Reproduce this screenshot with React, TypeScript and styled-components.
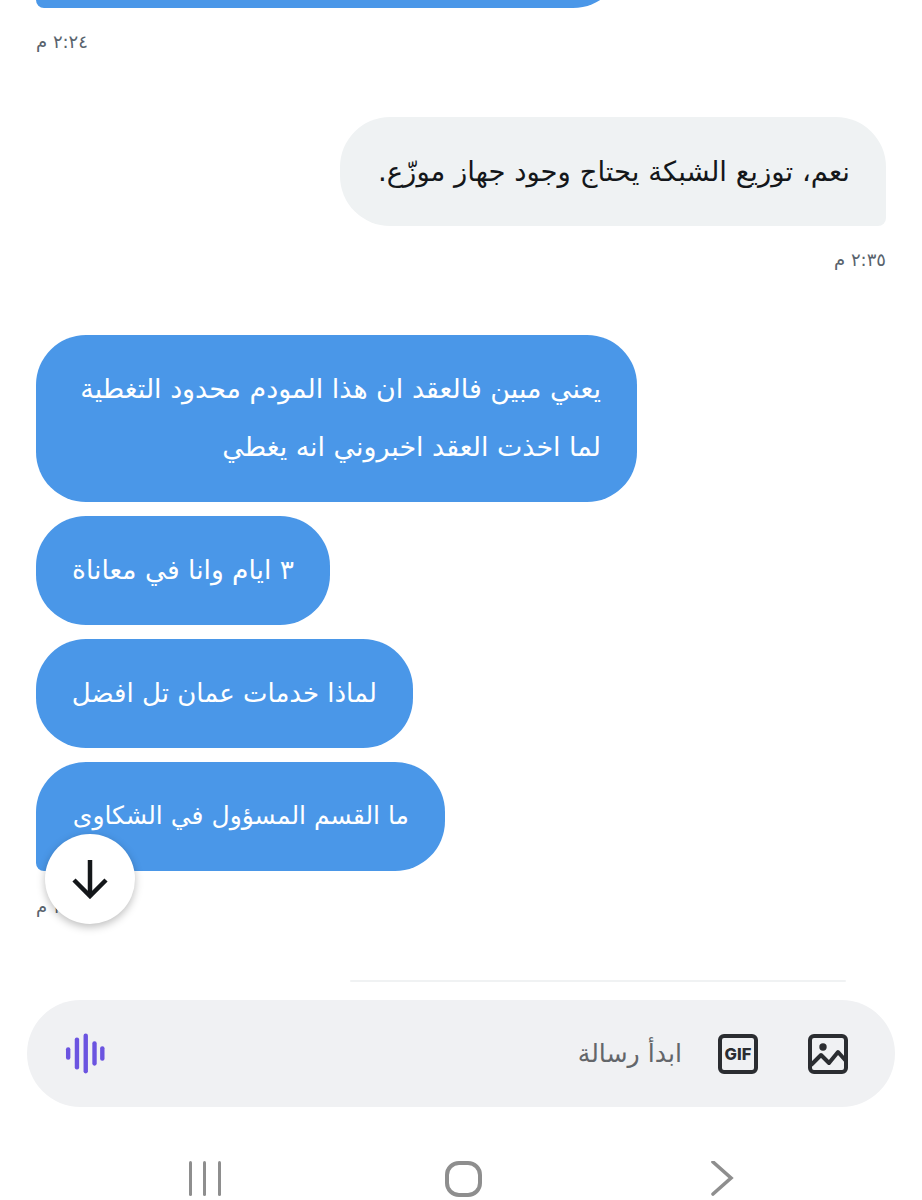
import styled, { createGlobalStyle } from "styled-components";

const GlobalStyle = createGlobalStyle`
  html, body {
    margin: 0;
    padding: 0;
    background: #fff;
  }
  body {
    font-family: "DejaVu Sans", "Noto Sans", sans-serif;
  }
`;

const Screen = styled.div`
  position: relative;
  box-sizing: border-box;
  width: 922px;
  height: 1200px;
  overflow: hidden;
  display: flex;
  flex-direction: column;
  background: #fff;
`;

const Thread = styled.div`
  display: flex;
  flex-direction: column;
  height: 980px;
  padding: 0 36px;
  box-sizing: border-box;
`;

const Bubble = styled.div<{ $mine?: boolean; $tail?: boolean; $width: number; $size?: number }>`
  box-sizing: border-box;
  width: ${(p) => p.$width}px;
  padding: 24.5px 36px 26.5px;
  direction: rtl;
  text-align: right;
  white-space: nowrap;
  font-size: ${(p) => p.$size ?? 26}px;
  line-height: 58px;
  border-radius: ${(p) => {
    if (p.$mine) return "50px 50px 8px 50px";
    return p.$tail ? "50px 50px 50px 8px" : "50px";
  }};
  background: ${(p) => (p.$mine ? "#eff2f3" : "#4a97e8")};
  color: ${(p) => (p.$mine ? "#14171a" : "#fff")};
  align-self: ${(p) => (p.$mine ? "flex-end" : "flex-start")};
`;

const ClippedBubble = styled(Bubble)`
  margin-top: -101px;
`;

const ReceivedGroup = styled.div`
  display: flex;
  flex-direction: column;
  gap: 14px;
  padding-bottom: 2px;
`;

const Time = styled.div<{ $mine?: boolean }>`
  direction: rtl;
  font-size: 18px;
  line-height: 24px;
  color: #59636d;
  align-self: ${(p) => (p.$mine ? "flex-end" : "flex-start")};
  margin-top: 22px;
  margin-bottom: 63px;
`;

const SentBlock = styled.div`
  display: flex;
  flex-direction: column;
`;

const ScrollDown = styled.button`
  position: absolute;
  left: 45px;
  top: 834px;
  width: 90px;
  height: 90px;
  padding: 0;
  border: none;
  border-radius: 50%;
  background: #fff;
  display: flex;
  align-items: center;
  justify-content: center;
  box-shadow: 0 3px 9px rgba(0, 0, 0, 0.26);
`;

const Divider = styled.div`
  width: 496px;
  height: 2px;
  margin-left: 350px;
  border-radius: 2px;
  background: #f0f2f3;
`;

const Composer = styled.div`
  box-sizing: border-box;
  width: 868px;
  height: 107px;
  margin: 18px 0 0 27px;
  padding: 0 47px 0 38px;
  border-radius: 54px;
  background: #f0f1f3;
  display: flex;
  align-items: center;
  direction: rtl;
`;

const ImageIcon = styled.svg`
  flex: none;
  margin-left: 50px;
`;

const GifBox = styled.div`
  box-sizing: border-box;
  width: 40px;
  height: 40px;
  flex: none;
  margin-left: 36px;
  border: 4.5px solid #2b2d31;
  border-radius: 6px;
  display: flex;
  align-items: center;
  justify-content: center;
  direction: ltr;
  font-family: "Inter", "Liberation Sans", sans-serif;
  font-weight: 800;
  font-size: 16.5px;
  color: #2b2d31;
`;

const Placeholder = styled.div`
  font-size: 25.2px;
  color: #63666a;
  white-space: nowrap;
`;

const VoiceIcon = styled.svg`
  margin-right: auto;
  flex: none;
`;

const NavBar = styled.div`
  display: flex;
  align-items: center;
  height: 35px;
  margin-top: 54px;
`;

const NavIcon = styled.svg<{ $gap: number }>`
  flex: none;
  margin-left: ${(p) => p.$gap}px;
`;

const bars = [
  { x: 66, y1: 1048, y2: 1061 },
  { x: 75, y1: 1038, y2: 1071 },
  { x: 84, y1: 1034, y2: 1075 },
  { x: 93, y1: 1042, y2: 1067 },
  { x: 101, y1: 1047, y2: 1062 },
];

export default function App() {
  return (
    <Screen>
      <GlobalStyle />
      <Thread>
        <ClippedBubble $width={587} $tail>&nbsp;</ClippedBubble>
        <Time>٢:٢٤ م</Time>
        <SentBlock>
          <Bubble $mine $width={546} $size={27.5}>نعم، توزيع الشبكة يحتاج وجود جهاز موزّع.</Bubble>
          <Time $mine>٢:٣٥ م</Time>
        </SentBlock>
        <ReceivedGroup>
          <Bubble $width={601} $size={26.9}>
            يعني مبين فالعقد ان هذا المودم محدود التغطية
            <br />
            لما اخذت العقد اخبروني انه يغطي
          </Bubble>
          <Bubble $width={294} $size={26.5}>٣ ايام وانا في معاناة</Bubble>
          <Bubble $width={377}>لماذا خدمات عمان تل افضل</Bubble>
          <Bubble $width={409} $size={25} $tail>ما القسم المسؤول في الشكاوى</Bubble>
        </ReceivedGroup>
        <Time>٢:٣٩ م</Time>
      </Thread>
      <ScrollDown aria-label="Scroll to bottom">
        <svg width="36" height="40" viewBox="0 0 36 40" fill="none" stroke="#14171a" strokeWidth="4.5">
          <path d="M18 1 V37" />
          <path d="M2 21 L18 37 L34 21" />
        </svg>
      </ScrollDown>
      <Divider />
      <Composer>
        <ImageIcon width="40" height="40" viewBox="0 0 40 40" fill="none" stroke="#2b2d31" strokeWidth="4" strokeLinejoin="round">
          <rect x="2" y="2" width="36" height="36" rx="4" />
          <circle cx="15" cy="13" r="3.7" fill="#2b2d31" stroke="none" />
          <path d="M3 31 L13 21 L21 29 L30 18 L38 27" />
        </ImageIcon>
        <GifBox>GIF</GifBox>
        <Placeholder>ابدأ رسالة</Placeholder>
        <VoiceIcon width="40" height="42" viewBox="65 1034 41 42">
          {bars.map((b) => (
            <rect key={b.x} x={b.x} y={b.y1} width="4.5" height={b.y2 - b.y1} rx="2.2" fill="#6b54e0" />
          ))}
        </VoiceIcon>
      </Composer>
      <NavBar>
        <NavIcon $gap={188} width="34" height="35" viewBox="0 0 34 35" fill="#8e8e8e">
          <rect x="1" y="0" width="3" height="35" rx="1.5" />
          <rect x="15" y="0" width="3" height="35" rx="1.5" />
          <rect x="30" y="0" width="3" height="35" rx="1.5" />
        </NavIcon>
        <NavIcon $gap={223} width="37" height="36" viewBox="0 0 37 36" fill="none" stroke="#8e8e8e" strokeWidth="4">
          <rect x="2" y="2" width="33" height="32" rx="12" />
        </NavIcon>
        <NavIcon $gap={229} width="24" height="36" viewBox="0 0 24 36" fill="none" stroke="#8e8e8e" strokeWidth="3.6" strokeLinecap="round">
          <path d="M2 1 L20 17 L2 33" />
        </NavIcon>
      </NavBar>
    </Screen>
  );
}
